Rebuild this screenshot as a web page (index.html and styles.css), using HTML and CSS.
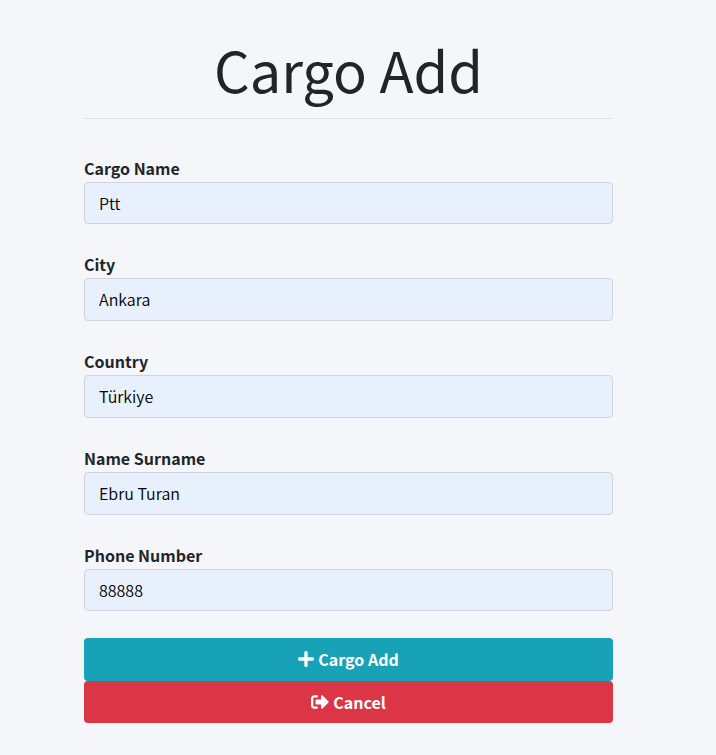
FILE: index.html
```html
<!DOCTYPE html>
<html lang="en">
<head>
<meta charset="utf-8">
<title>Cargo Add</title>
<link rel="stylesheet" href="styles.css">
</head>
<body>
<main class="panel">
  <h1 class="title">Cargo Add</h1>
  <form class="form">
    <div class="group"><label class="label" for="cargo">Cargo Name</label><input class="field" id="cargo" type="text" value="Ptt"></div>
    <div class="group"><label class="label" for="city">City</label><input class="field" id="city" type="text" value="Ankara"></div>
    <div class="group"><label class="label" for="country">Country</label><input class="field" id="country" type="text" value="Türkiye"></div>
    <div class="group"><label class="label" for="person">Name Surname</label><input class="field" id="person" type="text" value="Ebru Turan"></div>
    <div class="group"><label class="label" for="phone">Phone Number</label><input class="field" id="phone" type="text" value="88888"></div>
    <button class="btn btn-info" type="button"><svg class="icon" viewBox="0 0 448 512" width="16" height="18"><path fill="currentColor" d="M416 208H272V64c0-17.67-14.33-32-32-32h-32c-17.67 0-32 14.33-32 32v144H32c-17.67 0-32 14.33-32 32v32c0 17.67 14.33 32 32 32h144v144c0 17.67 14.33 32 32 32h32c17.67 0 32-14.33 32-32V304h144c17.67 0 32-14.33 32-32v-32c0-17.67-14.33-32-32-32z"/></svg><span>Cargo Add</span></button>
    <button class="btn btn-danger" type="button"><svg class="icon" viewBox="0 0 512 512" width="18" height="18"><path fill="currentColor" d="M497 273L329 441c-15 15-41 4.500-41-17v-96H152c-13.300 0-24-10.700-24-24v-96c0-13.300 10.700-24 24-24h136V88c0-21.400 25.900-32 41-17l168 168c9.300 9.400 9.300 24.600 0 34zM192 436v-40c0-6.600-5.400-12-12-12H96c-17.700 0-32-14.300-32-32V160c0-17.700 14.300-32 32-32h84c6.600 0 12-5.400 12-12V76c0-6.600-5.400-12-12-12H96c-53 0-96 43-96 96v192c0 53 43 96 96 96h84c6.600 0 12-5.400 12-12z"/></svg><span>Cancel</span></button>
  </form>
</main>
</body>
</html>
```
FILE: styles.css
```css
* { box-sizing: border-box; }
body {
  margin: 0;
  background: #f4f6f9;
  color: #212529;
  font: 16px/26px "Noto Sans CJK JP", "Noto Sans", sans-serif;
}
.panel { width: 529px; margin: 0 0 0 84px; padding-top: 33px; }
.title {
  margin: 0 0 36.7px;
  height: 86px;
  border-bottom: 1px solid #dee2e6;
  font-size: 56px;
  font-weight: 400;
  line-height: 72px;
  text-align: center;
}
.form { display: flex; flex-direction: column; }
.group { height: 96.8px; }
.group:nth-of-type(5) { height: 95.5px; }
.label { display: block; height: 26px; font-weight: 700; line-height: 25px; }
.field {
  display: block;
  width: 100%;
  height: 42.5px;
  padding: 0 14px 0.5px;
  border: 1px solid #ced4da;
  border-radius: 4px;
  background: #e8f0fe;
  color: #000;
  font: inherit;
  font-weight: 350;
}
.btn {
  display: flex;
  align-items: center;
  justify-content: center;
  gap: 4px;
  height: 42.5px;
  padding: 0 6px 1px;
  border: 0;
  border-radius: 4px;
  color: #fff;
  font: inherit;
  font-weight: 700;
}
.btn-info { background: #17a2b8; }
.btn-danger { background: #dc3545; }
```
